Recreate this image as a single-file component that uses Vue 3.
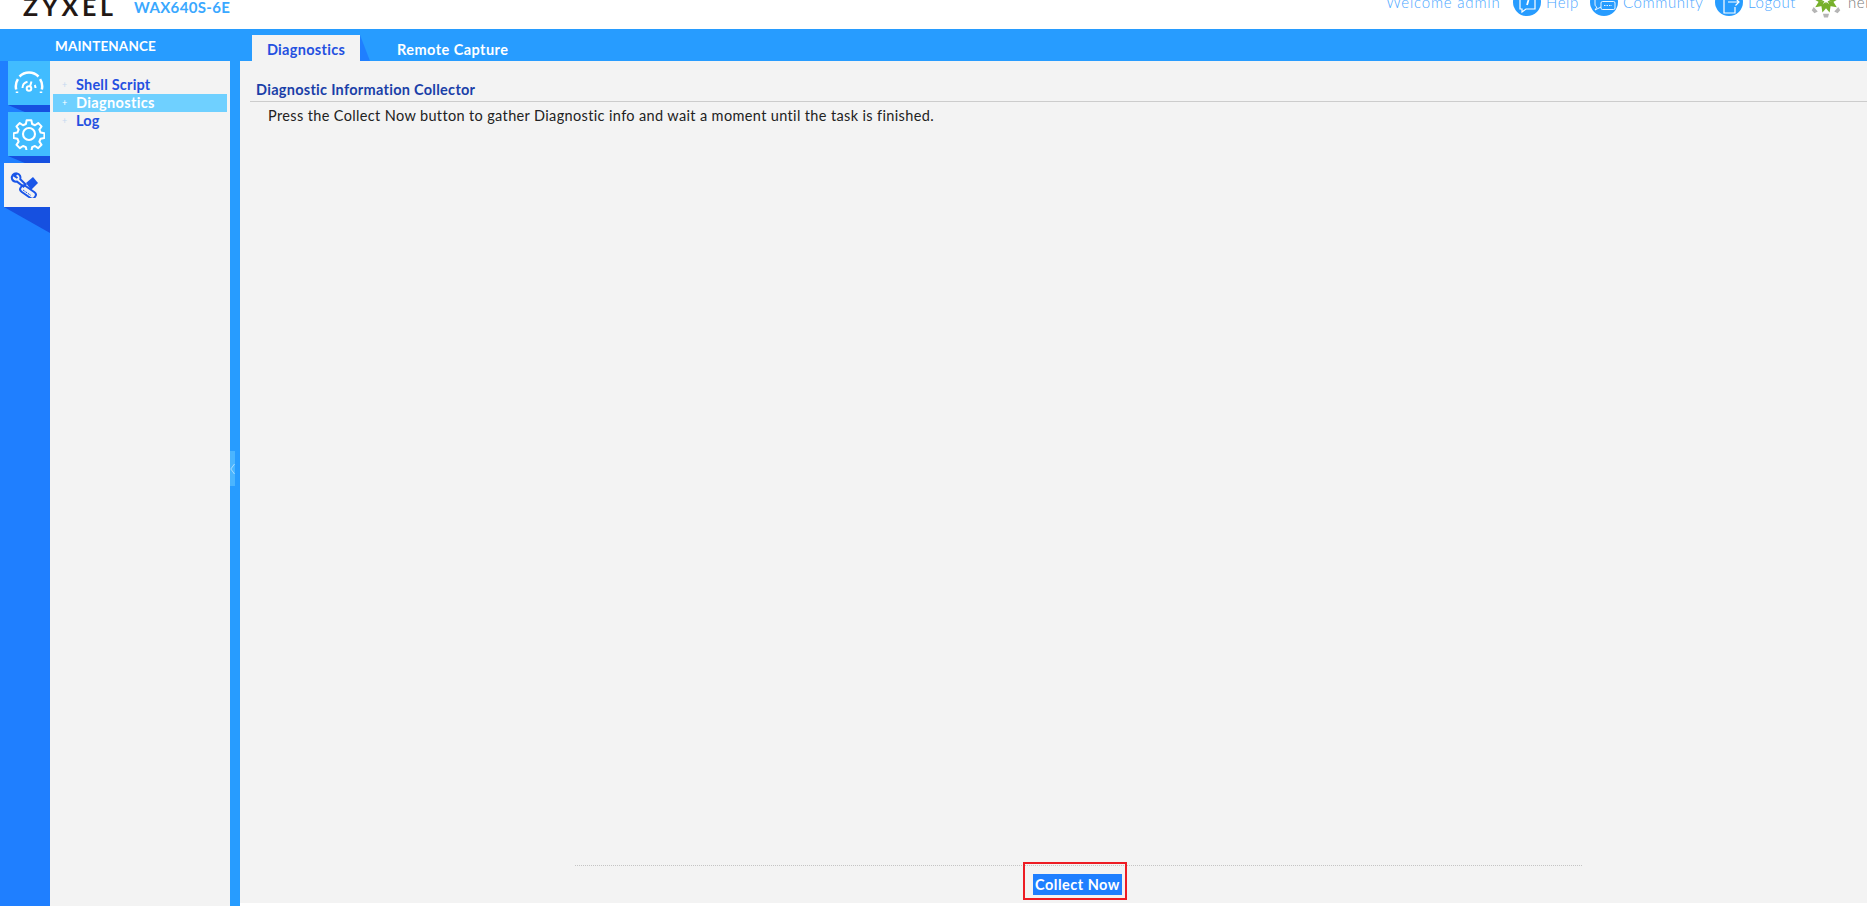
<script setup>
const menu = [
  { label: 'Shell Script', active: false },
  { label: 'Diagnostics', active: true },
  { label: 'Log', active: false },
]
const greenAngles = [16, -16, 56, -56, 96, -96]
const grayAngles = [0, 48, -48]
</script>

<template>
  <div class="page">
    <header class="top">
      <div class="brand">
        <span class="logo">ZYXEL</span>
        <span class="model">WAX640S-6E</span>
      </div>
      <div class="account">
        <span class="welcome">Welcome admin</span>
        <span class="link help">
          <span class="circle">
            <svg viewBox="0 0 28 28" width="28" height="28" fill="none" stroke="#fff" stroke-width="1.2">
              <path d="M7 8h15v13H13l-4 3v-3H7z" />
              <path d="M15.5 12l-1.5 5" stroke-width="1.8" />
            </svg>
          </span>
          <span>Help</span>
        </span>
        <span class="link community">
          <span class="circle">
            <svg viewBox="0 0 28 28" width="28" height="28" fill="none" stroke="#fff" stroke-width="0.9">
              <path d="M5 8v8c0 2 1 3 2 3l-2 3 6-3h0" />
              <rect x="11" y="13.5" width="14" height="8" rx="1.5" />
              <path d="M14 17.5h8" stroke-dasharray="1.5 1" />
            </svg>
          </span>
          <span>Community</span>
        </span>
        <span class="link logout">
          <span class="circle">
            <svg viewBox="0 0 28 28" width="28" height="28" fill="none" stroke="#fff" stroke-width="1.2">
              <path d="M19 9H9v16h11v-6" />
              <path d="M13 14h11M20.5 10.5L24 14l-3.5 3.5" />
            </svg>
          </span>
          <span>Logout</span>
        </span>
        <svg class="nebula" viewBox="0 0 32 18" width="32" height="18">
          <path
            v-for="a in greenAngles"
            :key="a"
            d="M0 2L-3 6.5L0 13L3 6.5z"
            fill="#76b02a"
            :transform="`translate(16 0) rotate(${a})`"
          />
          <path
            v-for="a in grayAngles"
            :key="a"
            d="M-3 13.8h6l-1 3.6h-4z"
            fill="#b5b5b5"
            :transform="`translate(16 0) rotate(${a})`"
          />
        </svg>
        <span class="neb">nebula</span>
      </div>
    </header>

    <div class="bar">
      <div class="section-name">MAINTENANCE</div>
      <nav class="tabs">
        <div class="tab current">Diagnostics</div>
        <div class="tab-edge"></div>
        <div class="tab">Remote Capture</div>
      </nav>
    </div>

    <div class="body">
      <aside class="rail">
        <div class="rail-item">
          <svg viewBox="0 0 30 24" width="30" height="24" fill="none" stroke="#fff" stroke-width="2.5">
            <path d="M5.5 5.5A13.5 13.5 0 0 1 24.5 5.5" />
            <path d="M2.2 18.5A13.5 13.5 0 0 1 3.9 8.2" />
            <path d="M27.8 18.5A13.5 13.5 0 0 0 26.1 8.2" />
            <path d="M3 22v-1.5M27 22v-1.5" />
            <path d="M8.5 17a6.5 6.5 0 0 1 5-6.3" stroke-width="2" />
            <path d="M21.5 17a6.5 6.5 0 0 0-.8-3" stroke-width="2" />
            <circle cx="15" cy="17.5" r="2.3" stroke-width="2" />
            <path d="M16 15.5l1.5-5" stroke-width="2" />
          </svg>
        </div>
        <div class="rail-shade small"></div>
        <div class="rail-item">
          <svg viewBox="0 0 32 32" width="32" height="32" fill="none" stroke="#fff" stroke-width="2.1" stroke-linejoin="round">
            <path d="M13.5 1.5h5l.8 4 3 1.3 3.4-2.3 3.5 3.5-2.3 3.4 1.3 3 4 .8v5l-4 .8-1.3 3 2.3 3.4-3.5 3.5-3.4-2.3-3 1.3-.8 4h-5l-.8-4-3-1.3-3.4 2.3-3.5-3.5 2.3-3.4-1.3-3-4-.8v-5l4-.8 1.3-3-2.3-3.4 3.5-3.5 3.4 2.3 3-1.3z" transform="translate(.8 .8) scale(.95)" />
            <circle cx="16" cy="16" r="6" />
          </svg>
        </div>
        <div class="rail-shade small"></div>
        <div class="rail-item active">
          <svg viewBox="0 0 28 26" width="28" height="26" fill="none" stroke="#1a56e8" stroke-width="2">
            <path d="M6.5 1.2A4.6 4.6 0 0 0 2 7c1 2.2 3 3 5 2.6l6.5 5 2-2.2-5.2-5.2C11 5 10 2 7 1.5L4.5 4l3 2" />
            <path d="M16 11l7-6 5 6-7 7z" fill="#1a56e8" stroke="none" />
            <rect x="9.5" y="16.5" width="17" height="7" rx="3" transform="rotate(35 18 20)" />
            <path d="M13 18l8 5.5" stroke-width="1" stroke-dasharray="2 1" />
          </svg>
        </div>
        <div class="rail-shade large"></div>
      </aside>

      <aside class="menu">
        <div v-for="item in menu" :key="item.label" class="menu-row" :class="{ on: item.active }">
          <span class="plus">+</span>
          <span>{{ item.label }}</span>
        </div>
      </aside>

      <div class="divider">
        <div class="handle">
          <svg viewBox="0 0 5 12" width="5" height="12" fill="none" stroke="#a8dcff" stroke-width="1">
            <path d="M4.5 1L.8 6l3.7 5" />
          </svg>
        </div>
      </div>

      <main class="content">
        <h2 class="heading">Diagnostic Information Collector</h2>
        <p class="note">Press the Collect Now button to gather Diagnostic info and wait a moment until the task is finished.</p>
        <footer class="actions">
          <div class="frame">
            <button class="collect" type="button">Collect Now</button>
          </div>
        </footer>
      </main>
    </div>
  </div>
</template>

<style>
html, body { margin: 0; overflow: hidden; background: #fff; }
</style>

<style scoped>
.page {
  width: 1867px;
  height: 906px;
  display: flex;
  flex-direction: column;
  overflow: hidden;
  background: #fff;
  font-family: "Lato", "Liberation Sans", sans-serif;
}
.top {
  flex: 0 0 29px;
  display: flex;
  justify-content: space-between;
  overflow: hidden;
}
.brand {
  display: flex;
  align-items: flex-end;
  padding-left: 23px;
  height: 15px;
}
.logo {
  font: 700 25px/17px "Lato", sans-serif;
  letter-spacing: 3.6px;
  color: #231815;
  width: 111px;
  flex: none;
}
.model {
  font: 700 15px/16px "Lato", sans-serif;
  letter-spacing: 0.35px;
  color: #3aa8ff;
  white-space: nowrap;
}
.account {
  display: flex;
  align-items: center;
  height: 28px;
  margin-top: -12px;
  font-size: 15px;
  font-weight: 300;
  color: #4aa6ff;
  white-space: nowrap;
  width: 481px;
  flex: none;
}
.welcome { width: 127px; flex: none; letter-spacing: 0.8px; }
.link { display: flex; flex: none; align-items: center; gap: 5px; letter-spacing: 0.6px; }
.help { width: 77px; }
.community { width: 125px; }
.logout { width: 95px; }
.circle {
  width: 28px;
  height: 28px;
  border-radius: 50%;
  background: #279cff;
  flex: none;
  display: block;
}
.circle svg { display: block; }
.nebula { flex: none; align-self: flex-start; margin-top: 12px; }
.neb { color: #777; margin-left: 6px; letter-spacing: 0.6px; flex: none; }
.bar {
  flex: 0 0 32px;
  background: #279cff;
  display: flex;
  align-items: flex-end;
}
.section-name {
  width: 197px;
  padding: 2px 0 0 55px;
  align-self: center;
  color: #fff;
  font-size: 13.5px;
  font-weight: 700;
  letter-spacing: 0.15px;
}
.tabs { display: flex; align-items: flex-end; height: 26px; }
.tab {
  height: 26px;
  line-height: 29px;
  font-size: 14.5px;
  font-weight: 700;
  letter-spacing: 0.45px;
  color: #fff;
  padding: 0 15px;
  white-space: nowrap;
}
.tab.current {
  width: 108px;
  box-sizing: border-box;
  background: #f3f3f3;
  color: #2450e0;
  text-align: center;
  padding: 0;
  letter-spacing: 0.3px;
}
.tab-edge {
  width: 10px;
  height: 26px;
  margin-right: 12px;
  background: #1f7fff;
  clip-path: polygon(0 0, 100% 100%, 0 100%);
}
.body { flex: 1; display: flex; min-height: 0; }
.rail {
  width: 50px;
  flex: none;
  background: #1f7fff;
  display: flex;
  flex-direction: column;
  align-items: flex-end;
}
.rail-item {
  width: 42px;
  height: 44px;
  background: #41bcff;
  display: flex;
  align-items: center;
  justify-content: center;
}
.rail-item.active {
  width: 46px;
  box-sizing: border-box;
  padding-right: 6px;
  background: #f3f3f3;
}
.rail-shade { background: #1650e0; }
.rail-shade.small {
  width: 42px;
  height: 7px;
  clip-path: polygon(0 0, 100% 0, 100% 100%, 40% 100%);
}
.rail-shade.large {
  width: 46px;
  height: 26px;
  clip-path: polygon(0 0, 100% 0, 100% 100%);
}
.menu {
  width: 180px;
  flex: none;
  box-sizing: border-box;
  background: #f3f3f3;
  padding: 15px 3px 0;
}
.menu-row {
  height: 18px;
  line-height: 18px;
  display: flex;
  color: #2450e0;
  font-size: 14.5px;
  font-weight: 700;
  letter-spacing: 0.2px;
}
.menu-row.on { background: #6fd0ff; color: #fff; letter-spacing: 0.35px; }
.plus {
  width: 23px;
  padding-left: 9px;
  box-sizing: border-box;
  font-size: 9px;
  font-weight: 400;
  color: #c4d8f0;
  flex: none;
}
.menu-row.on .plus { color: #fff; }
.divider {
  width: 10px;
  flex: none;
  background: #279cff;
  position: relative;
}
.handle {
  position: absolute;
  left: 0;
  top: 390px;
  width: 5px;
  height: 35px;
  background: #4ab5ff;
  display: flex;
  align-items: center;
}
.content {
  flex: 1;
  margin-bottom: 3px;
  background: #f3f3f3;
  display: flex;
  flex-direction: column;
  padding-left: 10px;
  min-width: 0;
}
.heading {
  margin: 20px 0 0;
  padding: 0 0 2px 6px;
  line-height: 18px;
  font-size: 14.5px;
  font-weight: 700;
  letter-spacing: 0.28px;
  color: #1a3fa8;
  border-bottom: 1px solid #ccc;
}
.note {
  margin: 5px 0 0 18px;
  font-size: 14.5px;
  line-height: 18px;
  letter-spacing: 0.36px;
  color: #222;
}
.actions {
  margin-top: auto;
  margin-left: 325px;
  margin-right: 285px;
  height: 37px;
  border-top: 1px dotted #c4c4c4;
  display: flex;
  justify-content: center;
  position: relative;
}
.frame {
  position: absolute;
  left: 448px;
  top: -4px;
  width: 97px;
  height: 31px;
  border: 2px solid #ed1c24;
  display: flex;
  justify-content: flex-end;
  align-items: flex-end;
  padding: 0 3px 3px 0;
}
.collect {
  width: 89px;
  height: 21px;
  padding: 0;
  border: 0;
  background: #1f7fff;
  color: #fff;
  font: 700 14.5px/21px "Lato", sans-serif;
  letter-spacing: 0.5px;
  text-align: center;
  white-space: nowrap;
}
</style>
